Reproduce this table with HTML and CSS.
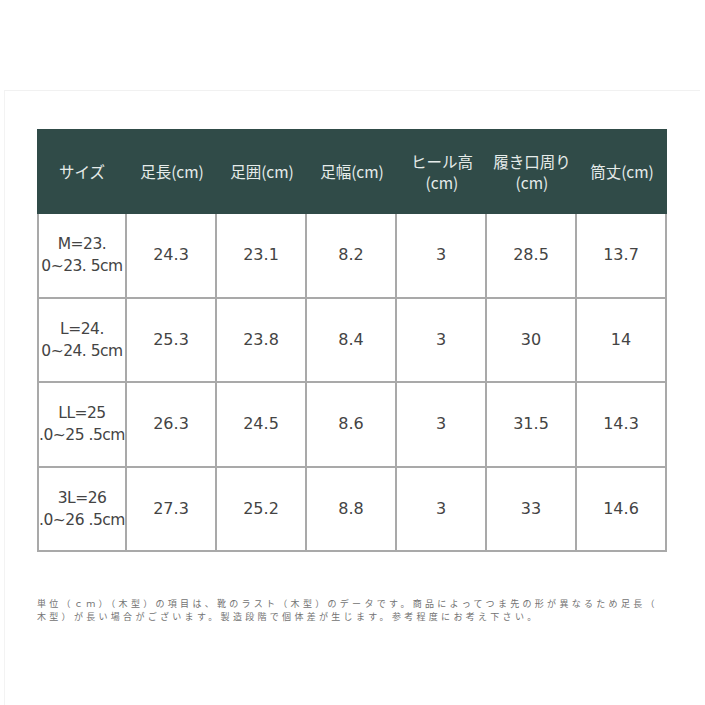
FILE: index.html
```html
<!DOCTYPE html>
<html lang="ja">
<head>
<meta charset="utf-8">
<link rel="stylesheet" href="styles.css">
</head>
<body>
<div class="frame">
  <div class="table">
    <div class="th">サイズ</div>
    <div class="th">足長(cm)</div>
    <div class="th">足囲(cm)</div>
    <div class="th">足幅(cm)</div>
    <div class="th">ヒール高<br>(cm)</div>
    <div class="th">履き口周り<br>(cm)</div>
    <div class="th">筒丈(cm)</div>

    <div class="td first">M=23.<br>0~23. 5cm</div>
    <div class="td">24.3</div>
    <div class="td">23.1</div>
    <div class="td">8.2</div>
    <div class="td">3</div>
    <div class="td">28.5</div>
    <div class="td">13.7</div>

    <div class="td first">L=24.<br>0~24. 5cm</div>
    <div class="td">25.3</div>
    <div class="td">23.8</div>
    <div class="td">8.4</div>
    <div class="td">3</div>
    <div class="td">30</div>
    <div class="td">14</div>

    <div class="td first">LL=25<br>.0~25 .5cm</div>
    <div class="td">26.3</div>
    <div class="td">24.5</div>
    <div class="td">8.6</div>
    <div class="td">3</div>
    <div class="td">31.5</div>
    <div class="td">14.3</div>

    <div class="td first">3L=26<br>.0~26 .5cm</div>
    <div class="td">27.3</div>
    <div class="td">25.2</div>
    <div class="td">8.8</div>
    <div class="td">3</div>
    <div class="td">33</div>
    <div class="td">14.6</div>
  </div>
  <p class="note"><span class="line">単位（ｃｍ）（木型）の項目は、靴のラスト（木型）のデータです。商品によってつま先の形が異なるため足長（</span><span class="line">木型）が長い場合がございます。製造段階で個体差が生じます。参考程度にお考え下さい。</span></p>
</div>
</body>
</html>
```
FILE: styles.css
```css
html, body {
  margin: 0;
  padding: 0;
  background: #ffffff;
}
.frame {
  margin: 90px 5px 0 4px;
  border-top: 1px solid #f1f1f1;
  border-left: 1px solid #f3f3f3;
  height: 615px;
  box-sizing: border-box;
  padding: 38px 0 0 32px;
}
.table {
  display: grid;
  grid-template-columns: repeat(7, 90px);
  grid-template-rows: 85px repeat(4, 84.5px);
  width: 630px;
}
.th {
  background: #304b48;
  color: #e6ecea;
  font-family: "Noto Sans CJK JP", "Noto Sans", sans-serif;
  font-size: 15.5px;
  line-height: 21px;
  display: flex;
  align-items: center;
  justify-content: center;
  text-align: center;
}
.td {
  border-right: 2px solid #a9a9a9;
  border-bottom: 2px solid #a9a9a9;
  color: #444;
  font-family: "DejaVu Sans", Verdana, sans-serif;
  font-size: 16px;
  line-height: 22px;
  display: flex;
  align-items: center;
  justify-content: center;
  text-align: center;
  box-sizing: border-box;
  white-space: nowrap;
}
.td.first {
  border-left: 2px solid #a9a9a9;
  font-size: 15.5px;
  letter-spacing: -0.5px;
}
.note {
  margin: 45px 0 0 0;
  color: #727272;
  font-family: "Noto Sans CJK JP", sans-serif;
  font-size: 9px;
  line-height: 13px;
  letter-spacing: 3.3px;
}
.line {
  display: block;
  white-space: nowrap;
}
```
